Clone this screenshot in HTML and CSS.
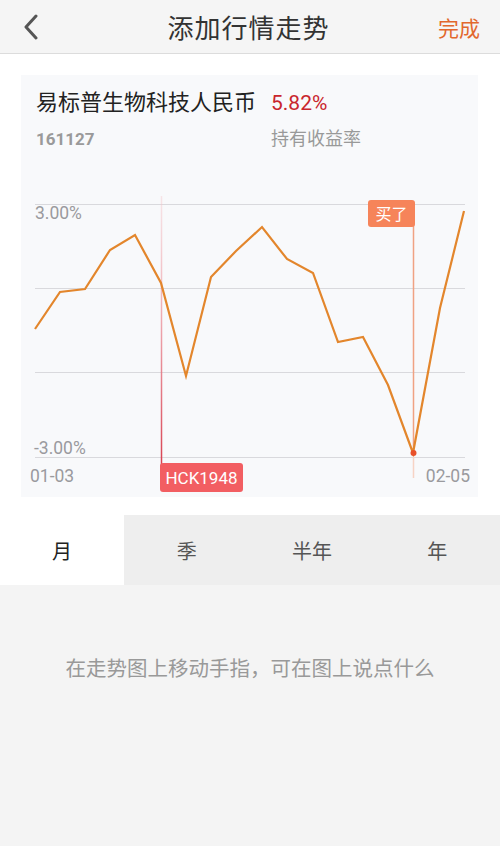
FILE: index.html
```html
<!DOCTYPE html>
<html lang="zh">
<head>
<meta charset="utf-8">
<link rel="stylesheet" href="styles.css">
</head>
<body>
<header class="bar">
  <span class="back"><svg width="16" height="26" viewBox="0 0 16 26"><path d="M13 2 L3 13 L13 24" fill="none" stroke="#555" stroke-width="3" stroke-linecap="round" stroke-linejoin="round"/></svg></span>
  <h1 class="title">添加行情走势</h1>
  <span class="done">完成</span>
</header>
<main class="main">
  <section class="card">
    <div class="head">
      <div class="name">易标普生物科技人民币</div>
      <div class="rate">5.82%</div>
      <div class="code">161127</div>
      <div class="label">持有收益率</div>
    </div>
    <svg class="chart" width="457" height="347" viewBox="21 150 457 347">
      <defs>
        <linearGradient id="redg" gradientUnits="userSpaceOnUse" x1="0" y1="196" x2="0" y2="466">
          <stop offset="0" stop-color="#f4c4c8" stop-opacity="0.4"/>
          <stop offset="0.4" stop-color="#eea0a8" stop-opacity="0.8"/>
          <stop offset="1" stop-color="#d84050"/>
        </linearGradient>
      </defs>
      <g stroke="#d9d9dd" stroke-width="1">
        <line x1="35" y1="204.5" x2="465" y2="204.5"/>
        <line x1="35" y1="288.5" x2="465" y2="288.5"/>
        <line x1="35" y1="372.5" x2="465" y2="372.5"/>
        <line x1="35" y1="457.5" x2="465" y2="457.5"/>
      </g>
      <g class="axis">
        <text x="35" y="219">3.00%</text>
        <text x="34" y="454">-3.00%</text>
        <text x="30" y="482">01-03</text>
        <text x="470" y="482" text-anchor="end">02-05</text>
      </g>
      <line x1="161.5" y1="196" x2="161.5" y2="466" stroke="url(#redg)" stroke-width="1.5"/>
      <line x1="413.5" y1="224" x2="413.5" y2="453" stroke="#f0a283" stroke-width="1.5"/>
      <line x1="413.5" y1="453" x2="413.5" y2="478" stroke="#f7d3c4" stroke-width="1.5"/>
      <polyline fill="none" stroke="#e3862c" stroke-width="2.2" stroke-linejoin="miter" points="35,329 60,292 85,289 110,250 135,235 161,283 186,376 211,277 236,251 262,227 287,259 313,273 338,342 363,337 388,385 413,453 440,308 464,211"/>
      <circle cx="413.5" cy="453" r="3" fill="#e8502a"/>
      <rect x="160" y="463" width="83" height="29" rx="3" fill="#f25e62"/>
      <text class="tag" x="201.5" y="484" text-anchor="middle">HCK1948</text>
      <rect x="368" y="200" width="47" height="27" rx="3" fill="#f6845a"/>
      <text class="tag cn" x="391.5" y="220" text-anchor="middle">买了</text>
    </svg>
  </section>
</main>
<nav class="tabs">
  <div class="tab active">月</div>
  <div class="tab">季</div>
  <div class="tab">半年</div>
  <div class="tab">年</div>
</nav>
<section class="hint">
  <p>在走势图上移动手指，可在图上说点什么</p>
</section>
</body>
</html>
```
FILE: styles.css
```css
* { box-sizing: border-box; }
html, body {
  margin: 0;
  padding: 0;
}
body {
  width: 500px;
  height: 846px;
  overflow: hidden;
  background: #f4f4f4;
  font-family: Roboto, "Noto Sans CJK SC", sans-serif;
}
.bar {
  height: 54px;
  background: #f5f5f5;
  border-bottom: 1px solid #dcdcdc;
  display: flex;
  align-items: center;
  justify-content: space-between;
  padding: 0 20px 0 23px;
}
.back {
  width: 50px;
  display: flex;
  align-items: center;
  padding-top: 1px;
}
.title {
  margin: 0;
  font-size: 26px;
  font-weight: 400;
  color: #333;
  letter-spacing: 1px;
  margin-left: -6px;
}
.done {
  width: 50px;
  text-align: right;
  font-size: 21px;
  color: #e2682e;
}
.main {
  background: #fff;
  padding: 21px 22px 18px 21px;
}
.card {
  width: 457px;
  height: 422px;
  background: #f8f9fb;
  display: flex;
  flex-direction: column;
}
.head {
  display: grid;
  grid-template-columns: 235px auto;
  row-gap: 11px;
  padding: 14px 0 0 15px;
  align-items: center;
}
.name {
  font-size: 22px;
  line-height: 28px;
  color: #222;
}
.rate {
  font-size: 21px;
  line-height: 28px;
  color: #c9262d;
}
.code {
  font-size: 17px;
  line-height: 22px;
  font-weight: 700;
  color: #9a9a9a;
}
.label {
  font-size: 18px;
  line-height: 22px;
  color: #999;
}
.chart {
  display: block;
}
.axis text {
  font-family: Roboto, sans-serif;
  font-size: 17.5px;
  fill: #9a9a9e;
}
.tag {
  font-family: Roboto, "Noto Sans CJK SC", sans-serif;
  font-size: 17px;
  fill: #fff;
}
.tag.cn {
  font-size: 16px;
}
.tabs {
  display: grid;
  grid-template-columns: 124px 1fr 1fr 1fr;
  height: 70px;
  background: #eeeeee;
}
.tab {
  display: flex;
  align-items: center;
  justify-content: center;
  font-size: 20px;
  color: #555;
}
.tab.active {
  background: #fff;
  color: #222;
}
.hint {
  padding-top: 69px;
  text-align: center;
}
.hint p {
  margin: 0;
  font-size: 20.5px;
  line-height: 30px;
  color: #999;
}
```
